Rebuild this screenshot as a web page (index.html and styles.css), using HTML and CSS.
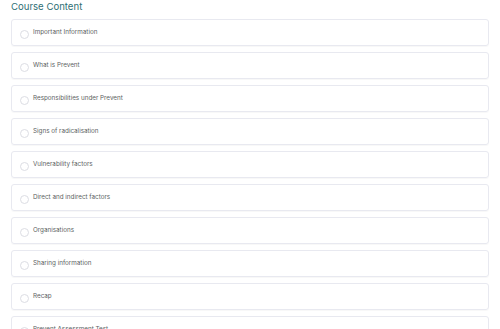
FILE: index.html
```html
<!DOCTYPE html>
<html lang="en">

<head>
    <meta charset="UTF-8">
    <meta name="viewport" content="width=device-width, initial-scale=1.0">
    <title>Course Content</title>
    <link rel="stylesheet" href="styles.css">
</head>

<body>
    <h2 class="title">Course Content</h2>
    <ul class="lessons">
        <li class="lesson"><span class="check"></span><span class="name">Important Information</span></li>
        <li class="lesson"><span class="check"></span><span class="name">What is Prevent</span></li>
        <li class="lesson"><span class="check"></span><span class="name">Responsibilities under Prevent</span></li>
        <li class="lesson"><span class="check"></span><span class="name">Signs of radicalisation</span></li>
        <li class="lesson"><span class="check"></span><span class="name">Vulnerability factors</span></li>
        <li class="lesson"><span class="check"></span><span class="name">Direct and indirect factors</span></li>
        <li class="lesson"><span class="check"></span><span class="name">Organisations</span></li>
        <li class="lesson"><span class="check"></span><span class="name">Sharing information</span></li>
        <li class="lesson"><span class="check"></span><span class="name">Recap</span></li>
        <li class="lesson"><span class="check"></span><span class="name">Prevent Assessment Test</span></li>
    </ul>
</body>

</html>
```

FILE: styles.css
```css
body {
    font-family: "Inter", "Noto Sans", sans-serif;
    margin: 0;
    padding: 0 11px;
    background-color: #fff;
    color: #555;
}

.title {
    margin: 0;
    padding-top: 1px;
    height: 18px;
    font-size: 9.6px;
    line-height: 11px;
    font-weight: 400;
    color: #2f6f75;
}

.lessons {
    list-style: none;
    margin: 0;
    padding: 0;
    display: flex;
    flex-direction: column;
    gap: 6px;
}

.lesson {
    display: flex;
    align-items: center;
    gap: 4px;
    height: 27px;
    box-sizing: border-box;
    padding-left: 8px;
    border: 1px solid #e8e9f0;
    border-radius: 3px;
    box-shadow: 0 1px 1px rgba(0, 0, 0, 0.03);
}

.check {
    width: 7px;
    height: 7px;
    margin-top: 4px;
    border: 1px solid #dcdde3;
    border-radius: 50%;
    flex-shrink: 0;
}

.name {
    font-size: 6.3px;
    color: #5c5f63;
    margin-top: -1px;
}
```
